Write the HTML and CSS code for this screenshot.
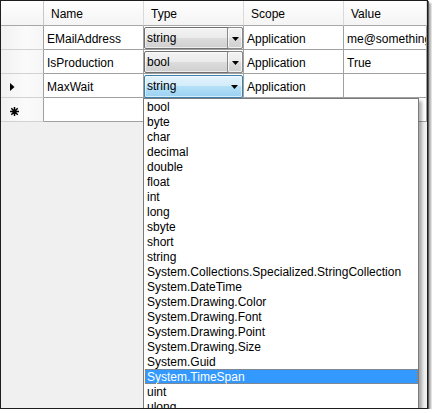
FILE: index.html
```html
<!DOCTYPE html>
<html lang="en">
<head>
    <meta charset="UTF-8">
    <title>Settings</title>
    <link rel="stylesheet" href="styles.css">
</head>
<body>
    <div class="shot">
        <div class="grid">
            <div class="hcell corner"></div>
            <div class="hcell">Name</div>
            <div class="hcell">Type</div>
            <div class="hcell">Scope</div>
            <div class="hcell">Value</div>

            <div class="rowhead"></div>
            <div class="cell">EMailAddress</div>
            <div class="cell combo-cell">
                <div class="combo">
                    <span class="combo-text">string</span>
                    <span class="combo-btn"><svg width="7" height="4" viewBox="0 0 7 4"><path d="M0 0h7L3.5 4z"/></svg></span>
                </div>
            </div>
            <div class="cell">Application</div>
            <div class="cell">me@something.com</div>

            <div class="rowhead"></div>
            <div class="cell">IsProduction</div>
            <div class="cell combo-cell">
                <div class="combo">
                    <span class="combo-text">bool</span>
                    <span class="combo-btn"><svg width="7" height="4" viewBox="0 0 7 4"><path d="M0 0h7L3.5 4z"/></svg></span>
                </div>
            </div>
            <div class="cell">Application</div>
            <div class="cell">True</div>

            <div class="rowhead current"><svg width="5" height="8" viewBox="0 0 5 8"><path d="M0 0l4.5 4L0 8z"/></svg></div>
            <div class="cell">MaxWait</div>
            <div class="cell combo-cell">
                <div class="combo active">
                    <span class="combo-text">string</span>
                    <span class="combo-btn"><svg width="7" height="4" viewBox="0 0 7 4"><path d="M0 0h7L3.5 4z"/></svg></span>
                </div>
            </div>
            <div class="cell">Application</div>
            <div class="cell"></div>

            <div class="rowhead newrow">
                <svg width="9" height="9" viewBox="0 0 9 9">
                    <path d="M4.5 0v9M0 4.5h9M1.3 1.3l6.4 6.4M7.7 1.3l-6.4 6.4" stroke="#000" stroke-width="1.5"/>
                </svg>
            </div>
            <div class="cell"></div>
            <div class="cell"></div>
            <div class="cell"></div>
            <div class="cell"></div>
        </div>

        <ul class="dropdown">
            <li>bool</li>
            <li>byte</li>
            <li>char</li>
            <li>decimal</li>
            <li>double</li>
            <li>float</li>
            <li>int</li>
            <li>long</li>
            <li>sbyte</li>
            <li>short</li>
            <li>string</li>
            <li>System.Collections.Specialized.StringCollection</li>
            <li>System.DateTime</li>
            <li>System.Drawing.Color</li>
            <li>System.Drawing.Font</li>
            <li>System.Drawing.Point</li>
            <li>System.Drawing.Size</li>
            <li>System.Guid</li>
            <li class="selected">System.TimeSpan</li>
            <li>uint</li>
            <li>ulong</li>
            <li>ushort</li>
        </ul>
    </div>
</body>
</html>
```

FILE: styles.css
```css
body {
    margin: 0;
    background-color: #fff;
    font-family: 'Liberation Sans', Arial, sans-serif;
    font-size: 12px;
    color: #000;
}
.shot {
    position: relative;
    width: 426px;
    height: 407px;
    border: 1px solid #1e1e1e;
    background-color: #f0f0f0;
    overflow: hidden;
    box-shadow: 1px 1px 0 #5a5a5a, 3px 3px 2px rgba(0, 0, 0, 0.35);
}
.grid {
    display: grid;
    grid-template-columns: 43px 100px 100px 100px 83px;
    grid-template-rows: 25px repeat(4, 24px);
}
.hcell {
    box-sizing: border-box;
    display: flex;
    align-items: center;
    padding: 2px 0 0 7px;
    background: linear-gradient(#ffffff, #f4f4f4);
    border-right: 1px solid #dadada;
    border-bottom: 1px solid #a8a8a8;
    white-space: nowrap;
}
.hcell.corner {
    border-right-color: #c8c8c8;
}
.rowhead {
    box-sizing: border-box;
    display: flex;
    align-items: center;
    padding: 3px 0 0 9px;
    background: linear-gradient(to right, #f1f1f1, #fbfbfb 60%, #f6f6f6);
    border-right: 1px solid #a0a0a0;
    border-bottom: 1px solid #d2d2d2;
}
.rowhead.newrow {
    padding-left: 9px;
}
.cell {
    box-sizing: border-box;
    display: flex;
    align-items: center;
    padding: 2px 0 0 3px;
    background-color: #fff;
    border-right: 1px solid #a0a0a0;
    border-bottom: 1px solid #a0a0a0;
    white-space: nowrap;
    overflow: hidden;
}
.combo-cell {
    padding: 1px 0 0 0;
    align-items: flex-start;
    overflow: visible;
}
.combo {
    box-sizing: border-box;
    display: flex;
    width: 99px;
    height: 22px;
    border: 1px solid #707070;
    border-radius: 2px;
    background: linear-gradient(#f3f3f3 0%, #ebebeb 50%, #dddddd 50%, #cfcfcf 100%);
    box-shadow: inset 0 0 0 1px rgba(255, 255, 255, 0.6);
}
.combo-text {
    flex: 1;
    padding: 2px 0 0 2px;
    line-height: 17px;
}
.combo-btn {
    box-sizing: border-box;
    display: flex;
    align-items: center;
    justify-content: center;
    width: 16px;
    margin: -1px -1px -1px 0;
    border: 1px solid #8a8a8a;
    border-radius: 2px;
    background: linear-gradient(#f3f3f3 0%, #ebebeb 50%, #dddddd 50%, #cfcfcf 100%);
    box-shadow: inset 0 0 0 1px rgba(255, 255, 255, 0.7);
}
.combo-btn svg {
    margin-top: 1px;
}
.combo.active {
    height: 23px;
    border-color: #3c7fb1;
    background: linear-gradient(#e3f3fc 0%, #d2ecfa 50%, #b4e0f8 50%, #9ad1f1 100%);
}
.combo.active .combo-btn {
    border: none;
    margin: 0;
    background: none;
    box-shadow: none;
}
.dropdown {
    position: absolute;
    left: 142px;
    top: 97px;
    box-sizing: border-box;
    width: 276px;
    margin: 0;
    padding: 0;
    list-style: none;
    background-color: #fff;
    border: 1px solid #7a7a7a;
    box-shadow: 3px 3px 3px rgba(0, 0, 0, 0.3);
}
.dropdown li {
    height: 15px;
    line-height: 17px;
    margin-left: 1px;
    padding-left: 2px;
    white-space: nowrap;
}
.dropdown li.selected {
    background-color: #3399ff;
    color: #fff;
    outline: 1px dotted #c8782a;
    outline-offset: -1px;
}
```
